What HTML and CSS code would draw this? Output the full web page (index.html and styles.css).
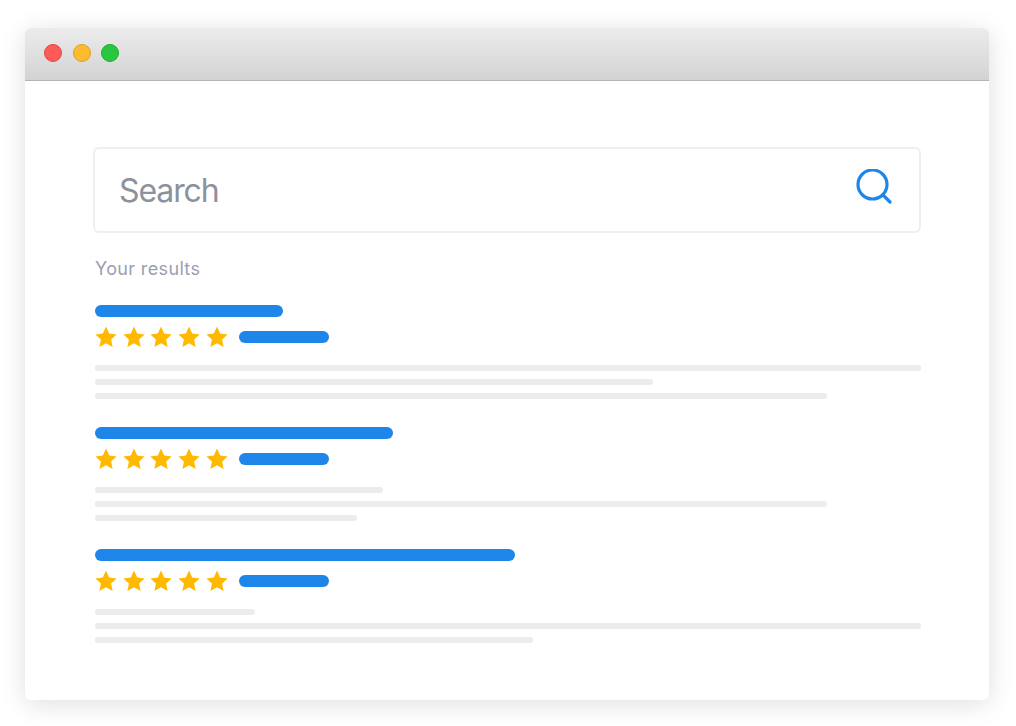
FILE: index.html
```html
<!DOCTYPE html>
<html lang="en">
<head>
<meta charset="utf-8">
<title>Search results</title>
<link rel="stylesheet" href="styles.css">
</head>
<body>
<svg class="defs" width="0" height="0" aria-hidden="true"><defs>
<symbol id="star" viewBox="0 0 22 22"><path d="M11 .6l3.2 6.9 7.4.9-5.5 5.1 1.5 7.4L11 17.2l-6.6 3.7 1.5-7.4L.4 8.4l7.4-.9z"/></symbol>
</defs></svg>
<main class="window">
  <header class="titlebar">
    <span class="dot dot-red"></span>
    <span class="dot dot-yellow"></span>
    <span class="dot dot-green"></span>
  </header>
  <div class="content">
    <div class="search">
      <span class="search-label">Search</span>
      <svg class="search-icon" viewBox="0 0 36 36" width="36" height="36" fill="none" stroke="#1e86e8" stroke-linecap="round"><circle cx="16.5" cy="15.5" r="14.5" stroke-width="3.2"/><path d="M27 26l7 7" stroke-width="3.2"/></svg>
    </div>
    <p class="results-label">Your results</p>
    <section class="result">
      <div class="bar title-a"></div>
      <div class="rating">
        <div class="stars"><svg class="star"><use href="#star"/></svg><svg class="star"><use href="#star"/></svg><svg class="star"><use href="#star"/></svg><svg class="star"><use href="#star"/></svg><svg class="star"><use href="#star"/></svg></div>
        <div class="bar rating-bar"></div>
      </div>
      <div class="lines">
        <div class="line w-full"></div>
        <div class="line w-558"></div>
        <div class="line w-732"></div>
      </div>
    </section>
    <section class="result">
      <div class="bar title-b"></div>
      <div class="rating">
        <div class="stars"><svg class="star"><use href="#star"/></svg><svg class="star"><use href="#star"/></svg><svg class="star"><use href="#star"/></svg><svg class="star"><use href="#star"/></svg><svg class="star"><use href="#star"/></svg></div>
        <div class="bar rating-bar"></div>
      </div>
      <div class="lines">
        <div class="line w-288"></div>
        <div class="line w-732"></div>
        <div class="line w-262"></div>
      </div>
    </section>
    <section class="result">
      <div class="bar title-c"></div>
      <div class="rating">
        <div class="stars"><svg class="star"><use href="#star"/></svg><svg class="star"><use href="#star"/></svg><svg class="star"><use href="#star"/></svg><svg class="star"><use href="#star"/></svg><svg class="star"><use href="#star"/></svg></div>
        <div class="bar rating-bar"></div>
      </div>
      <div class="lines">
        <div class="line w-160"></div>
        <div class="line w-full"></div>
        <div class="line w-438"></div>
      </div>
    </section>
  </div>
</main>
</body>
</html>
```
FILE: styles.css
```css
html, body { margin: 0; height: 726px; overflow: hidden; background: #fff; }
body { padding: 28px 27px 26px 25px; box-sizing: border-box; font-family: "Inter", "Liberation Sans", sans-serif; }
.defs { display: block; height: 0; }
.window { width: 964px; height: 672px; background: #fff; border-radius: 6px; box-shadow: 0 4px 26px rgba(0,0,0,.13); overflow: hidden; }
.titlebar { border-bottom: 1px solid #b4b4b4; background: linear-gradient(#ececec, #d3d3d3); display: flex; align-items: center; gap: 10.5px; padding: 0 0 2px 19px; box-sizing: content-box; height: 50px; }
.dot { width: 18px; height: 18px; border-radius: 50%; box-sizing: border-box; }
.dot-red { background: #fc5b57; border: 1px solid #e5473f; }
.dot-yellow { background: #fdbb2e; border: 1px solid #dfa023; }
.dot-green { background: #27c73f; border: 1px solid #1eae2e; }
.content { padding: 66px 68px 0 70px; }
.search { margin-left: -2px; height: 86px; box-sizing: border-box; border: 2px solid #eeeef3; border-radius: 6px; display: flex; align-items: center; justify-content: space-between; padding: 0 27px 0 24px; }
.search-label { font-size: 32px; letter-spacing: -1.1px; color: #8b929b; line-height: 1; margin-top: 1px; }
.search-icon { margin-top: -7px; }
.results-label { margin: 24px 0 0; font-size: 18px; letter-spacing: .35px; line-height: 24px; color: #9d9db2; }
.result { margin-top: 28px; }
.results-label + .result { margin-top: 24px; }
.bar { height: 12px; border-radius: 6px; background: #1e86e8; }
.title-a { width: 188px; }
.title-b { width: 298px; }
.title-c { width: 420px; }
.rating { display: flex; align-items: center; margin-top: 9px; height: 22px; }
.stars { display: flex; gap: 5.7px; fill: #ffb900; margin-right: 11.2px; }
.star { width: 22px; height: 22px; display: block; }
.rating-bar { width: 90px; }
.lines { margin-top: 17px; display: flex; flex-direction: column; gap: 8px; }
.line { height: 6px; border-radius: 3px; background: #ececee; }
.w-full { width: 826px; }
.w-732 { width: 732px; }
.w-558 { width: 558px; }
.w-438 { width: 438px; }
.w-288 { width: 288px; }
.w-262 { width: 262px; }
.w-160 { width: 160px; }
```
